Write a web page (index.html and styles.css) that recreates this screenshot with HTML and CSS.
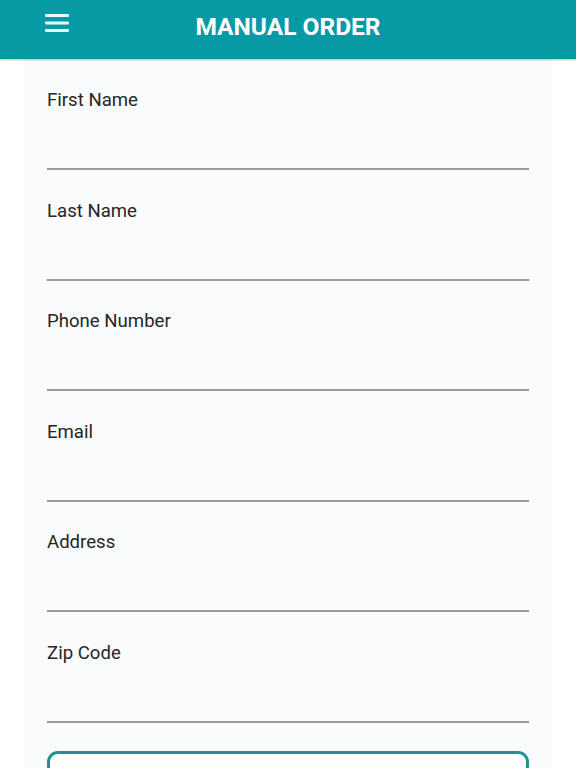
FILE: index.html
```html
<!DOCTYPE html>
<html lang="en">
<head>
<meta charset="utf-8">
<title>Manual Order</title>
<link rel="stylesheet" href="styles.css">
</head>
<body>
<header class="topbar">
  <button class="menu-btn" aria-label="Menu">
    <svg width="24" height="20" viewBox="0 0 24 20"><rect x="0" y="1" width="24" height="3" rx="1"/><rect x="0" y="8.5" width="24" height="3" rx="1"/><rect x="0" y="16" width="24" height="3" rx="1"/></svg>
  </button>
  <h1 class="title">MANUAL ORDER</h1>
</header>
<main class="card">
  <div class="field"><label class="label">First Name</label><div class="input"></div></div>
  <div class="field"><label class="label">Last Name</label><div class="input"></div></div>
  <div class="field"><label class="label">Phone Number</label><div class="input"></div></div>
  <div class="field"><label class="label">Email</label><div class="input"></div></div>
  <div class="field"><label class="label">Address</label><div class="input"></div></div>
  <div class="field"><label class="label">Zip Code</label><div class="input"></div></div>
  <button class="submit">SUBMIT</button>
</main>
</body>
</html>
```
FILE: styles.css
```css
* { box-sizing: border-box; }
html, body { margin: 0; padding: 0; }
body {
  background: #ffffff;
  font-family: Roboto, "Liberation Sans", Arial, sans-serif;
  width: 576px;
  height: 768px;
  overflow: hidden;
}
.topbar {
  position: relative;
  height: 59px;
  background: #0799a4;
  box-shadow: 0 1px 2px rgba(0,0,0,0.25);
  display: flex;
  align-items: center;
  justify-content: center;
  z-index: 1;
}
.menu-btn {
  position: absolute;
  left: 45px;
  top: 13px;
  padding: 0;
  border: 0;
  background: none;
  line-height: 0;
}
.menu-btn svg { fill: #e8fbfb; }
.title {
  margin: 0;
  color: #ffffff;
  font-size: 24.5px;
  font-weight: 700;
  letter-spacing: 0;
  line-height: 1;
  padding-bottom: 4px;
}
.card {
  margin: 0 23px;
  background: #f9fbfd;
  padding: 30px 24px 0;
  display: flex;
  flex-direction: column;
  gap: 29.6px;
  min-height: 709px;
}
.field { display: flex; flex-direction: column; }
.label {
  font-size: 18.6px;
  line-height: 22px;
  color: #262626;
}
.input {
  height: 59px;
  border-bottom: 2px solid #9a9a9a;
}
.submit {
  margin-top: -1.6px;
  height: 56px;
  border: 3px solid #23908f;
  border-radius: 11px;
  background: #ffffff;
  color: #23908f;
  font-family: Roboto, "Liberation Sans", Arial, sans-serif;
  font-size: 20px;
  font-weight: 700;
  padding-top: 10px;
}
```
